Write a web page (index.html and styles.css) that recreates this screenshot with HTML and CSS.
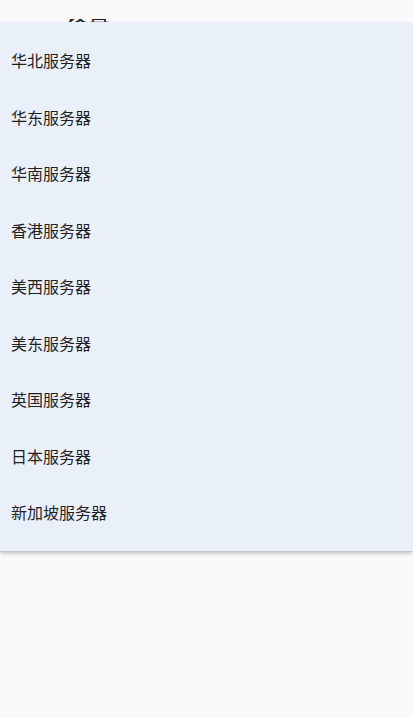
FILE: index.html
```html
<!DOCTYPE html>
<html lang="zh-CN">
<head>
<meta charset="utf-8">
<title>服务器</title>
<link rel="stylesheet" href="styles.css">
</head>
<body>
<div class="app">
  <div class="statusbar"></div>
  <header class="appbar">
    <span class="title">设置</span>
  </header>
  <main class="content"></main>
  <ul class="menu">
    <li class="item">华北服务器</li>
    <li class="item">华东服务器</li>
    <li class="item">华南服务器</li>
    <li class="item">香港服务器</li>
    <li class="item">美西服务器</li>
    <li class="item">美东服务器</li>
    <li class="item">英国服务器</li>
    <li class="item">日本服务器</li>
    <li class="item">新加坡服务器</li>
  </ul>
</div>
</body>
</html>
```

FILE: styles.css
```css
html, body {
  margin: 0;
  padding: 0;
  background: #fafafa;
}
body {
  font-family: Roboto, "Noto Sans", "Noto Sans CJK SC", sans-serif;
  color: #1c1b1f;
}
.app {
  position: relative;
  width: 413px;
  height: 718px;
  overflow: hidden;
}
.statusbar {
  height: 19px;
  background: #fafafa;
}
.appbar {
  height: 3px;
  padding-left: 66px;
  overflow: hidden;
}
.title {
  display: block;
  margin-top: -19px;
  font-size: 22px;
  line-height: 22px;
  font-family: "Noto Sans CJK SC", sans-serif;
  color: #1c1b1f;
}
.menu {
  position: absolute;
  top: 22px;
  left: 0;
  right: 0;
  margin: 0;
  padding: 10px 0 10px;
  list-style: none;
  background: #eaf0fa;
  box-shadow: 0 3px 4px rgba(0, 0, 0, 0.16), 0 1px 2px rgba(0, 0, 0, 0.12);
}
.item {
  height: 56.5px;
  display: flex;
  align-items: center;
  padding-left: 11px;
  font-family: "Noto Sans CJK SC", sans-serif;
  font-size: 16px;
  color: #1f1f1f;
}
```
